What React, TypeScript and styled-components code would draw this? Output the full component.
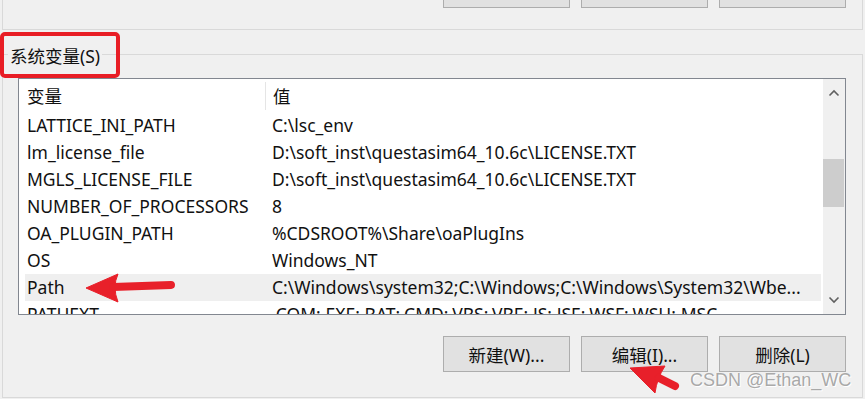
import React from "react";
import styled, { createGlobalStyle } from "styled-components";

const Global = createGlobalStyle`
  html, body { margin: 0; padding: 0; background: #f0f0f0; }
  * { box-sizing: border-box; }
`;

const Window = styled.div`
  position: relative;
  width: 865px;
  height: 399px;
  overflow: hidden;
  background: #f0f0f0;
  font-family: "Noto Sans", "Noto Sans CJK SC", sans-serif;
  font-size: 17.5px;
  color: #111;
`;

const UpperGroup = styled.div`
  margin: 0 2px;
  height: 30px;
  border: 1px solid #d9d9d9;
  border-top: none;
  display: flex;
  justify-content: flex-end;
  align-items: flex-start;
  gap: 11px;
  padding-right: 16px;
`;

const Button = styled.div<{ $cut?: boolean }>`
  width: 127px;
  height: 36px;
  margin-top: ${(p) => (p.$cut ? "-28px" : "0")};
  background: #e1e1e1;
  border: 1px solid #adadad;
  display: flex;
  align-items: center;
  justify-content: center;
  font-size: 17.5px;
  color: #111;
`;

const LowerGroup = styled.div`
  margin: 24px 2px 0;
  height: 344px;
  border: 1px solid #d9d9d9;
  display: flex;
  flex-direction: column;
`;

const Legend = styled.div`
  align-self: flex-start;
  margin: -9px 0 0 5px;
  padding: 0 2px;
  line-height: 20px;
  background: #f0f0f0;
`;

const ListBox = styled.div`
  margin: 12px 0 0 15px;
  width: 828px;
  height: 237px;
  border: 1px solid #828790;
  background: #fff;
  display: grid;
  grid-template-columns: 1fr 22px;
  overflow: hidden;
`;

const ListContent = styled.div`
  overflow: hidden;
  display: flex;
  flex-direction: column;
`;

const Header = styled.div`
  height: 33px;
  flex: none;
  display: flex;
  align-items: center;
`;

const HeaderCell = styled.div<{ $w?: number; $pad: number }>`
  width: ${(p) => (p.$w ? `${p.$w}px` : "auto")};
  padding-left: ${(p) => p.$pad}px;
  flex: ${(p) => (p.$w ? "none" : "1")};
`;

const HeaderDivider = styled.div`
  width: 1px;
  height: 28px;
  background: #e5e5e5;
`;

const Row = styled.div<{ $hl?: boolean }>`
  flex: none;
  height: 27px;
  margin: 0 2px 0 6px;
  display: grid;
  grid-template-columns: 247px 1fr;
  align-items: center;
  line-height: 27px;
  white-space: nowrap;
  background: ${(p) => (p.$hl ? "#efefef" : "transparent")};
`;

const NameCell = styled.div`
  padding-left: 2px;
  overflow: hidden;
`;

const ValueCell = styled.div`
  overflow: hidden;
`;

const ScrollBar = styled.div`
  background: #f0f0f0;
  display: flex;
  flex-direction: column;
`;

const ArrowBtn = styled.div`
  height: 28px;
  flex: none;
  display: flex;
  align-items: center;
  justify-content: center;
`;

const Track = styled.div`
  flex: 1;
`;

const Thumb = styled.div`
  width: 21px;
  height: 48px;
  background: #cdcdcd;
`;

const ButtonRow = styled.div`
  margin-top: 21px;
  display: flex;
  justify-content: flex-end;
  gap: 11px;
  padding-right: 16px;
`;

const RedBox = styled.div`
  position: absolute;
  left: 0;
  top: 32px;
  width: 120px;
  height: 46px;
  border: 4px solid #e81d25;
  border-radius: 5px;
`;

const Overlay = styled.svg`
  position: absolute;
  left: 0;
  top: 0;
  pointer-events: none;
`;

const Watermark = styled.div`
  position: absolute;
  left: 690px;
  top: 371px;
  font-family: "Liberation Sans", Arial, sans-serif;
  font-size: 18px;
  line-height: 18px;
  color: #a9a9a9;
  text-shadow: 1px 1px 0 #ffffff, -1px 0 0 rgba(255,255,255,0.6);
  white-space: nowrap;
`;

const Chevron = ({ up }: { up?: boolean }) => (
  <svg width="12" height="8" viewBox="0 0 12 8">
    <polyline
      points={up ? "1.5,6.5 6,2 10.5,6.5" : "1.5,1.5 6,6 10.5,1.5"}
      fill="none"
      stroke="#606060"
      strokeWidth="1.6"
    />
  </svg>
);

const rows: [string, string][] = [
  ["LATTICE_INI_PATH", "C:\\lsc_env"],
  ["lm_license_file", "D:\\soft_inst\\questasim64_10.6c\\LICENSE.TXT"],
  ["MGLS_LICENSE_FILE", "D:\\soft_inst\\questasim64_10.6c\\LICENSE.TXT"],
  ["NUMBER_OF_PROCESSORS", "8"],
  ["OA_PLUGIN_PATH", "%CDSROOT%\\Share\\oaPlugIns"],
  ["OS", "Windows_NT"],
  ["Path", "C:\\Windows\\system32;C:\\Windows;C:\\Windows\\System32\\Wbe..."],
  ["PATHEXT", ".COM;.EXE;.BAT;.CMD;.VBS;.VBE;.JS;.JSE;.WSF;.WSH;.MSC"],
];

export default function App() {
  return (
    <Window>
      <Global />
      <UpperGroup>
        <Button $cut />
        <Button $cut />
        <Button $cut />
      </UpperGroup>
      <LowerGroup>
        <Legend>系统变量(S)</Legend>
        <ListBox>
          <ListContent>
            <Header>
              <HeaderCell $w={246} $pad={8}>变量</HeaderCell>
              <HeaderDivider />
              <HeaderCell $pad={7}>值</HeaderCell>
            </Header>
            {rows.map(([n, v]) => (
              <Row key={n} $hl={n === "Path"}>
                <NameCell>{n}</NameCell>
                <ValueCell>{v}</ValueCell>
              </Row>
            ))}
          </ListContent>
          <ScrollBar>
            <ArrowBtn>
              <Chevron up />
            </ArrowBtn>
            <Track>
              <Thumb style={{ marginTop: 52 }} />
            </Track>
            <ArrowBtn>
              <Chevron />
            </ArrowBtn>
          </ScrollBar>
        </ListBox>
        <ButtonRow>
          <Button>新建(W)...</Button>
          <Button>编辑(I)...</Button>
          <Button>删除(L)</Button>
        </ButtonRow>
      </LowerGroup>
      <RedBox />
      <Overlay width="865" height="399" viewBox="0 0 865 399">
        <g fill="#e8202a" stroke="#e8202a" strokeLinejoin="round">
          <path d="M86 288 L118 274 Q112 287 118 302 Z" strokeWidth="1" />
          <line x1="113" y1="287" x2="171" y2="285" strokeWidth="8" strokeLinecap="round" />
          <path d="M630 368 L665 366 Q657 378 655 393 Z" strokeWidth="1" />
          <line x1="659" y1="378" x2="675" y2="386" strokeWidth="8" strokeLinecap="round" />
        </g>
      </Overlay>
      <Watermark>CSDN @Ethan_WC</Watermark>
    </Window>
  );
}
